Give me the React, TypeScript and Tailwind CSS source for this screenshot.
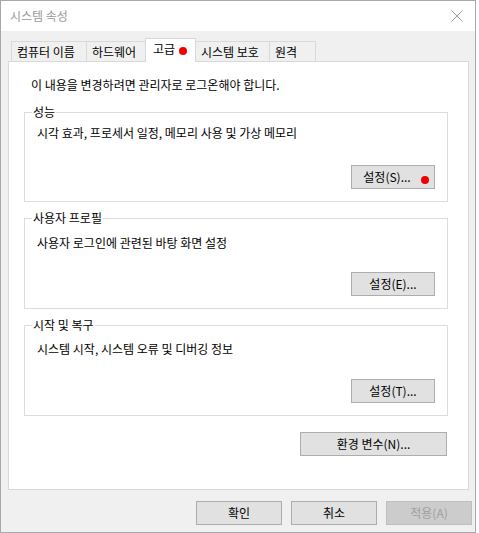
import React from 'react'

const font = { fontFamily: '"Noto Sans CJK KR", "Noto Sans", sans-serif' }

function Btn({ children, w = 'w-[84px]', disabled = false, dot = false }: { children: React.ReactNode; w?: string; disabled?: boolean; dot?: boolean }) {
  return (
    <div
      className={`relative flex h-[24px] ${w} items-center justify-center border text-[12px] leading-[16px] ${
        disabled ? 'border-[#bfbfbf] bg-[#cccccc] text-[#a0a0a0]' : 'border-[#adadad] bg-[#e1e1e1] text-black'
      } ${dot ? 'pr-[12px]' : ''}`}
    >
      {children}
      {dot && <span className="absolute right-[5px] top-[10px] h-[8px] w-[8px] rounded-full bg-[#f00000]" />}
    </div>
  )
}

function Group({ title, text, btn, textMt, btnMt, dot }: { title: string; text: string; btn: string; textMt: string; btnMt: string; dot?: boolean }) {
  return (
    <fieldset className="w-[424px] border border-[#dcdcdc] pl-[7px] pr-[12px] pb-[12px]">
      <legend className="px-[1px] text-[12px] leading-[16px] text-black">{title}</legend>
      <div className={`${textMt} ml-[5px] text-[12px] leading-[16px] text-black`}>{text}</div>
      <div className={`${btnMt} flex justify-end`}>
        <Btn dot={dot}>{btn}</Btn>
      </div>
    </fieldset>
  )
}

const tabs = [
  { label: '컴퓨터 이름', w: 'w-[76px]' },
  { label: '하드웨어', w: 'w-[60px]' },
  { label: '고급', w: 'w-[51px]', sel: true },
  { label: '시스템 보호', w: 'w-[75px]' },
  { label: '원격', w: 'w-[47px]' },
]

export default function App() {
  return (
    <div className="h-[533px] w-[479px] bg-white" style={font}>
      <div className="flex h-[533px] w-[476px] flex-col border border-[#a8a8a8] bg-[#f0f0f0]">
        {/* title bar */}
        <div className="flex h-[30px] items-center justify-between bg-white pl-[9px] pr-[5px]">
          <span className="text-[12px] leading-[16px] text-[#999999]">시스템 속성</span>
          <svg width="14" height="14" viewBox="0 0 14 14" className="mr-[6px]">
            <path d="M1.5 1.5 L12.5 12.5 M12.5 1.5 L1.5 12.5" stroke="#9a9a9a" strokeWidth="1" fill="none" />
          </svg>
        </div>

        {/* tabs */}
        <div className="mt-[8px] ml-[10px] flex h-[22px] items-end">
          {tabs.map((t, i) =>
            t.sel ? (
              <div
                key={i}
                className={`relative z-10 -ml-[1px] -mb-[1px] flex h-[24px] ${t.w} items-center border border-b-0 border-[#d9d9d9] bg-white pl-[7px] pb-[3px] text-[12px] leading-[16px] text-black`}
              >
                {t.label}
                <span className="ml-[4px] mt-[3px] h-[8px] w-[8px] rounded-full bg-[#f00000]" />
              </div>
            ) : (
              <div
                key={i}
                className={`${i > 0 ? '-ml-[1px]' : ''} flex h-[20px] ${t.w} items-center border border-b-0 border-[#d9d9d9] bg-[#f0f0f0] pl-[5px] text-[12px] leading-[16px] text-black`}
              >
                {t.label}
              </div>
            )
          )}
        </div>

        {/* panel */}
        <div className="ml-[7px] h-[429px] w-[461px] border border-[#d9d9d9] bg-white pl-[15px] pt-[15px]">
          <div className="ml-[7px] text-[12px] leading-[16px] text-black">이 내용을 변경하려면 관리자로 로그온해야 합니다.</div>
          <div className="mt-[11px] flex flex-col gap-[8px]">
            <Group title="성능" text="시각 효과, 프로세서 일정, 메모리 사용 및 가상 메모리" btn="설정(S)..." textMt="mt-[5px]" btnMt="mt-[24px]" dot />
            <Group title="사용자 프로필" text="사용자 로그인에 관련된 바탕 화면 설정" btn="설정(E)..." textMt="mt-[9px]" btnMt="mt-[21px]" />
            <Group title="시작 및 복구" text="시스템 시작, 시스템 오류 및 디버깅 정보" btn="설정(T)..." textMt="mt-[8px]" btnMt="mt-[22px]" />
          </div>
          <div className="mt-[16px] flex w-[423px] justify-end">
            <Btn w="w-[147px]">환경 변수(N)...</Btn>
          </div>
        </div>

        {/* bottom buttons */}
        <div className="mt-[11px] flex justify-end gap-[9px] pr-[3px]">
          <Btn w="w-[86px]">확인</Btn>
          <Btn w="w-[86px]">취소</Btn>
          <Btn w="w-[86px]" disabled>
            적용(A)
          </Btn>
        </div>
      </div>
    </div>
  )
}
